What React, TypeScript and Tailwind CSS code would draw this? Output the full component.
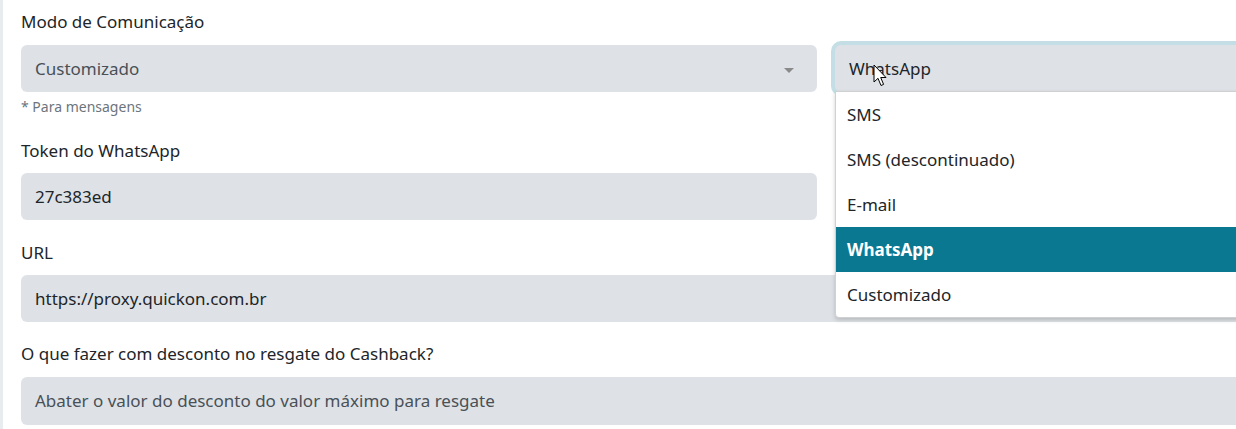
import React from "react";

const font = { fontFamily: '"Noto Sans", "Open Sans", sans-serif' };

function Cursor() {
  return (
    <svg
      className="absolute left-[870px] top-[64px] z-30"
      width="15"
      height="24"
      viewBox="0 0 15 24"
    >
      <path
        d="M1 1 L1 18 L5 14.3 L8 21.5 L10.6 20.4 L7.7 13.5 L13 13.5 Z"
        fill="#ffffff"
        stroke="#000000"
        strokeWidth="1"
        strokeLinejoin="round"
      />
    </svg>
  );
}

export default function App() {
  const items = ["SMS", "SMS (descontinuado)", "E-mail", "WhatsApp", "Customizado"];
  return (
    <div
      className="relative w-[1236px] h-[429px] overflow-hidden bg-white border-l-[3px] border-[#e9ecef] text-[17px] text-[#212529]"
      style={font}
    >
      <div className="flex gap-[18px] pl-[18px]">
        {/* left column */}
        <div className="flex flex-col w-[796px] shrink-0">
          <div className="h-[24px] leading-[24px] mt-[10px] mb-[11px]">Modo de Comunicação</div>
          <div className="relative flex items-center h-[47px] rounded-[6px] bg-[#dee2e6] pl-[14px] text-[#495057]">
            Customizado
            <span className="absolute right-[23px] top-[23px] w-0 h-0 border-l-[5px] border-r-[5px] border-t-[5px] border-l-transparent border-r-transparent border-t-[#8a8a8a]" />
          </div>
          <div className="h-[20px] leading-[20px] mt-[5px] text-[14px] text-[#6c757d]">* Para mensagens</div>
          <div className="h-[24px] leading-[24px] mt-[22px] mb-[10px]">Token do WhatsApp</div>
          <div className="flex items-center h-[47px] rounded-[6px] bg-[#dee2e6] pl-[14px] text-[#212529]">
            27c383ed
          </div>
        </div>
        {/* right column */}
        <div className="relative flex flex-col w-[796px] shrink-0">
          <div className="mt-[45px] flex items-center h-[47px] rounded-[6px] bg-[#dee2e6] pl-[14px] text-[#212529] shadow-[0_0_0_4px_#c3dfe5]">
            WhatsApp
          </div>
        </div>
      </div>

      <div className="flex flex-col pl-[18px]">
        <div className="h-[24px] leading-[24px] mt-[21px] mb-[10px]">URL</div>
        <div className="flex items-center h-[47px] w-[1400px] rounded-[6px] bg-[#dee2e6] pl-[14px] text-[#212529]">
          https://proxy.quickon.com.br
        </div>
        <div className="h-[24px] leading-[24px] mt-[20px] mb-[11px]">
          O que fazer com desconto no resgate do Cashback?
        </div>
        <div className="flex items-center h-[48px] w-[1400px] rounded-[6px] bg-[#dee2e6] pl-[14px] text-[#495057]">
          Abater o valor do desconto do valor máximo para resgate
        </div>
      </div>

      {/* dropdown menu overlay */}
      <div className="absolute left-[832px] top-[91px] z-20 w-[500px] bg-white border border-[#d0d0d0] rounded-bl-[4px] shadow-[0_2px_4px_rgba(0,0,0,0.18)]">
        {items.map((it) => (
          <div
            key={it}
            className={
              it === "WhatsApp"
                ? "h-[45px] flex items-center pl-[11px] bg-[#0a7891] text-white font-bold"
                : "h-[45px] flex items-center pl-[11px] text-[#212529]"
            }
          >
            {it}
          </div>
        ))}
      </div>

      <Cursor />
    </div>
  );
}
